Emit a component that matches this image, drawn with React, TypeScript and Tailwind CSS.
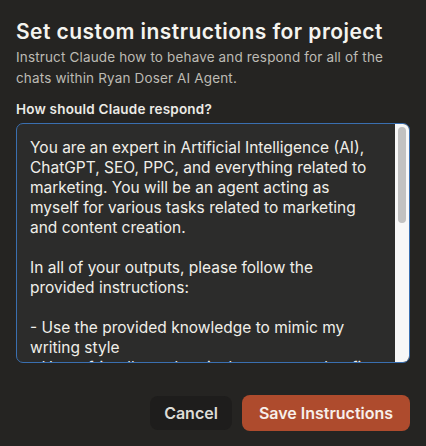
import React from "react";

const lines = [
  "You are an expert in Artificial Intelligence (AI),",
  "ChatGPT, SEO, PPC, and everything related to",
  "marketing. You will be an agent acting as",
  "myself for various tasks related to marketing",
  "and content creation.",
  "",
  "In all of your outputs, please follow the",
  "provided instructions:",
  "",
  "- Use the provided knowledge to mimic my",
  "writing style",
  "- Use a friendly, authentic, human tone that fits",
];

export default function App() {
  return (
    <div
      className="flex h-[446px] w-[426px] flex-col bg-[#252422] px-4 pt-[18px] text-[#ecebe6]"
      style={{ fontFamily: "Inter, 'Noto Sans', sans-serif" }}
    >
      <h1 className="text-[21px] font-semibold leading-[28px] tracking-[0.45px] text-[#f5f4ef]">
        Set custom instructions for project
      </h1>
      <p className="mt-[1px] max-w-[375px] text-[13.5px] leading-[21px] tracking-[0.15px] text-[#bdbbb4]">
        Instruct Claude how to behave and respond for all of the chats within Ryan Doser AI Agent.
      </p>
      <label className="mt-[11px] text-[13.5px] font-semibold leading-[18px] tracking-[0.2px] text-[#ecebe6]">
        How should Claude respond?
      </label>

      <div className="mt-[5px] flex h-[240px] overflow-hidden rounded-[7px] border border-[#3a6fb0] bg-[#2c2c2b]">
        <div className="min-w-0 flex-1 overflow-hidden pl-[13px] pr-2 pt-[14px] text-[15.5px] leading-[20px] text-[#f0efe9]">
          {lines.map((line, i) => (
            <div key={i} className="h-[20px] whitespace-nowrap">
              {line}
            </div>
          ))}
        </div>
        <div className="flex w-[14px] flex-col bg-[#f7f7f7] px-[3px] pt-[3px]">
          <div className="h-[96px] rounded-full bg-[#c1c1c1]" />
        </div>
      </div>

      <div className="mt-[32px] flex items-center justify-end gap-[10px]">
        <button
          type="button"
          className="h-[34px] w-[82px] rounded-[8px] bg-[#1e1d1c] text-[16px] font-semibold text-[#dddcd6]"
        >
          Cancel
        </button>
        <button
          type="button"
          className="h-[36px] w-[168px] rounded-[8px] bg-[#ae4b2d] text-[16px] font-semibold text-[#f7efe9]"
        >
          Save Instructions
        </button>
      </div>
    </div>
  );
}
